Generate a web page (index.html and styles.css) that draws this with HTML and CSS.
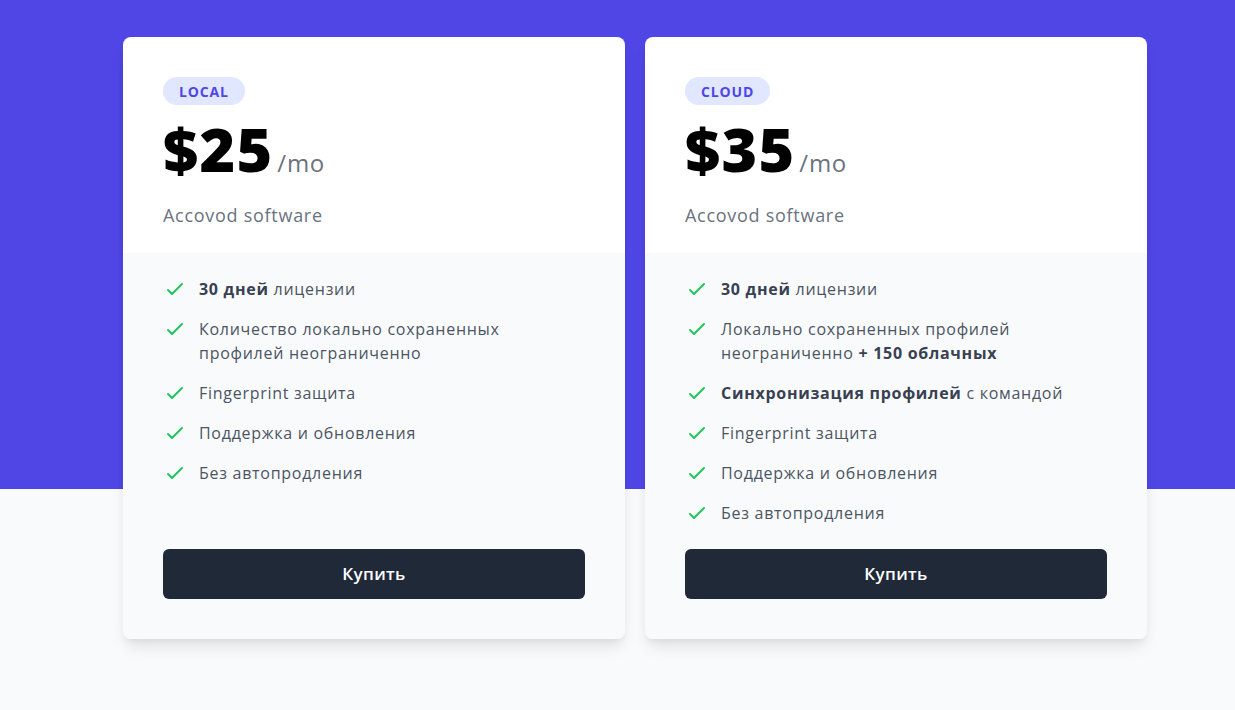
FILE: index.html
```html
<!DOCTYPE html>
<html lang="ru">
<head>
<meta charset="utf-8">
<title>Тарифы</title>
<link rel="stylesheet" href="styles.css">
</head>
<body>
<div class="page">
  <div class="plans">
    <div class="card">
      <div class="card-top">
        <span class="badge">Local</span>
        <div class="price"><span class="amount">$25</span><span class="period">/mo</span></div>
        <p class="desc">Accovod software</p>
      </div>
      <div class="card-body">
        <ul class="features">
          <li><svg class="check" viewBox="0 0 24 24"><path d="M5 13l4 4L19 7"/></svg><p><b>30 дней</b> лицензии</p></li>
          <li><svg class="check" viewBox="0 0 24 24"><path d="M5 13l4 4L19 7"/></svg><p>Количество локально сохраненных профилей неограниченно</p></li>
          <li><svg class="check" viewBox="0 0 24 24"><path d="M5 13l4 4L19 7"/></svg><p>Fingerprint защита</p></li>
          <li><svg class="check" viewBox="0 0 24 24"><path d="M5 13l4 4L19 7"/></svg><p>Поддержка и обновления</p></li>
          <li><svg class="check" viewBox="0 0 24 24"><path d="M5 13l4 4L19 7"/></svg><p>Без автопродления</p></li>
        </ul>
        <a class="buy" href="#">Купить</a>
      </div>
    </div>
    <div class="card">
      <div class="card-top">
        <span class="badge">Cloud</span>
        <div class="price"><span class="amount">$35</span><span class="period">/mo</span></div>
        <p class="desc">Accovod software</p>
      </div>
      <div class="card-body">
        <ul class="features">
          <li><svg class="check" viewBox="0 0 24 24"><path d="M5 13l4 4L19 7"/></svg><p><b>30 дней</b> лицензии</p></li>
          <li><svg class="check" viewBox="0 0 24 24"><path d="M5 13l4 4L19 7"/></svg><p>Локально сохраненных профилей неограниченно <b>+ 150 облачных</b></p></li>
          <li><svg class="check" viewBox="0 0 24 24"><path d="M5 13l4 4L19 7"/></svg><p><b>Синхронизация профилей</b> с командой</p></li>
          <li><svg class="check" viewBox="0 0 24 24"><path d="M5 13l4 4L19 7"/></svg><p>Fingerprint защита</p></li>
          <li><svg class="check" viewBox="0 0 24 24"><path d="M5 13l4 4L19 7"/></svg><p>Поддержка и обновления</p></li>
          <li><svg class="check" viewBox="0 0 24 24"><path d="M5 13l4 4L19 7"/></svg><p>Без автопродления</p></li>
        </ul>
        <a class="buy" href="#">Купить</a>
      </div>
    </div>
  </div>
</div>
</body>
</html>
```
FILE: styles.css
```css
* { box-sizing: border-box; }

html, body {
  margin: 0;
  padding: 0;
}

body {
  font-family: "Open Sans", "Noto Sans", sans-serif;
  letter-spacing: 0.045em;
  background: #f9fafb;
  color: #111827;
}

/* indigo band across the top, cards overlap into the light area */
.page {
  min-height: 710px;
  background: linear-gradient(to bottom, #4f46e5 0, #4f46e5 489px, #f9fafb 489px);
  padding-top: 37px;
}

.plans {
  display: grid;
  grid-template-columns: 502px 502px;
  gap: 20px;
  margin-left: 123px;
}

.card {
  display: flex;
  flex-direction: column;
  border-radius: 8px;
  overflow: hidden;
  box-shadow: 0 10px 15px -3px rgba(0, 0, 0, 0.1), 0 4px 6px -2px rgba(0, 0, 0, 0.05);
}

.card-top {
  background: #fff;
  padding: 40px 40px 24px;
}

.badge {
  display: inline-flex;
  align-items: center;
  height: 28px;
  padding: 0 16px;
  border-radius: 9999px;
  background: #e0e7ff;
  color: #4f46e5;
  font-size: 14px;
  font-weight: 700;
  letter-spacing: 0.06em;
  text-transform: uppercase;
}

.price {
  display: flex;
  align-items: baseline;
  margin-top: 13px;
  height: 60px;
}

.amount {
  font-size: 61px;
  line-height: 1;
  font-weight: 800;
  color: #000;
  letter-spacing: 0.02em;
}

.period {
  margin-left: 4px;
  font-size: 24px;
  font-weight: 400;
  color: #6b7280;
}

.desc {
  margin: 23px 0 0;
  font-size: 18px;
  line-height: 28px;
  color: #6b7280;
}

.card-body {
  flex: 1;
  display: flex;
  flex-direction: column;
  justify-content: space-between;
  gap: 24px;
  background: #f9fafb;
  padding: 24px 40px 40px;
}

.features {
  list-style: none;
  margin: 0;
  padding: 0;
  display: flex;
  flex-direction: column;
  gap: 16px;
}

.features li {
  display: flex;
  align-items: flex-start;
}

.check {
  flex-shrink: 0;
  width: 24px;
  height: 24px;
  fill: none;
  stroke: #22c55e;
  stroke-width: 2;
  stroke-linecap: round;
  stroke-linejoin: round;
}

.features p {
  margin: 0 0 0 12px;
  font-size: 16px;
  line-height: 24px;
  color: #4b5563;
}

.features b {
  font-weight: 700;
  color: #374151;
}

.buy {
  display: flex;
  align-items: center;
  justify-content: center;
  height: 50px;
  padding-bottom: 2px;
  border-radius: 6px;
  background: #1f2937;
  color: #fff;
  font-size: 17px;
  font-weight: 600;
  letter-spacing: 0.02em;
  text-decoration: none;
}
```
